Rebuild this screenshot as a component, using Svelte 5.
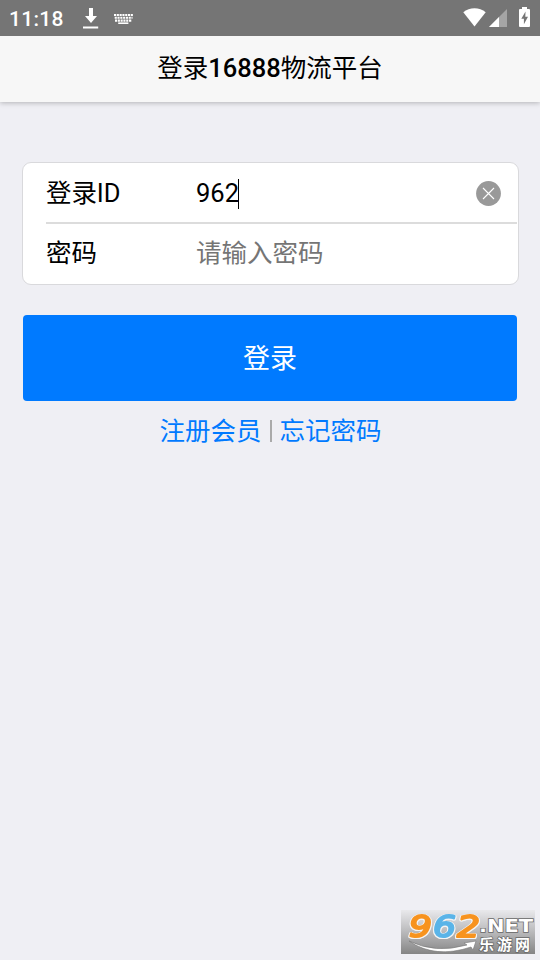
<script>
  let loginId = $state('962');
</script>

<div class="screen">
  <div class="status">
    <span class="time">11:18</span>
    <svg class="download" width="16" height="20" viewBox="0 0 16 20" fill="#fff">
      <path d="M6 0h4v8h4l-6 7-6-7h4zM0 18.4h15.2v2H0z" />
    </svg>
    <svg class="keyboard" width="19" height="11" viewBox="0 0 19 11" stroke="#fff" stroke-width="2.1">
      <path d="M0 1h19M.7 3.8h17.8M1 6.6h17" stroke-dasharray="2.1 .7" />
      <path d="M4.2 9.2h10.2" stroke-width="1.6" />
    </svg>
    <span class="spacer"></span>
    <svg class="wifi" width="23" height="19" viewBox="0 0 23 19">
      <path d="M.3 4.2C6.5-1.2 16.5-1.2 22.7 4.2L11.5 18.6z" fill="#fff" />
    </svg>
    <svg class="signal" width="19" height="19" viewBox="0 0 19 19">
      <path d="M0 18L18 0v18z" fill="#a5a5a5" />
      <path d="M0 18L10 8v10z" fill="#fff" />
    </svg>
    <svg class="battery" width="11" height="20" viewBox="0 0 11 20">
      <path d="M3 0h5v2h2q1 0 1 1v16q0 1-1 1H1q-1 0-1-1V3q0-1 1-1h2z" fill="#fff" />
      <path d="M6.5 4.5L2.3 11.8h2.6v5.5L9 9.8H6.3z" fill="#757575" />
    </svg>
  </div>

  <header>登录<b>16888</b>物流平台</header>

  <main>
    <div class="card">
      <div class="row first">
        <span class="label">登录ID</span>
        <span class="value">{loginId}</span><i class="caret"></i>
        <button class="clear" aria-label="清除" onclick={() => (loginId = '')}>
          <svg width="25" height="25" viewBox="0 0 25 25">
            <circle cx="12.5" cy="12.5" r="12.4" fill="#999" />
            <path d="M7 7l11 11M18 7L7 18" stroke="#fff" stroke-width="1.1" />
          </svg>
        </button>
      </div>
      <div class="row second">
        <span class="label">密码</span>
        <span class="value hint">请输入密码</span>
      </div>
    </div>
    <button class="submit">登录</button>
    <div class="links"><span class="link">注册会员</span><i class="bar"></i><span class="link">忘记密码</span></div>
  </main>

  <svg class="mark" width="134" height="44" viewBox="0 0 134 44">
    <defs>
      <linearGradient id="plate" x1="0" y1="0" x2="0" y2="1">
        <stop offset="0" stop-color="#e9e9ec" />
        <stop offset=".5" stop-color="#b9b9bb" />
        <stop offset="1" stop-color="#858585" />
      </linearGradient>
    </defs>
    <rect width="134" height="44" fill="url(#plate)" />
    <path d="M8 31Q34 44 66 35L63 33 75 31 72 40 70 37Q34 49 8 31z" fill="#fff" stroke="#777" stroke-width=".6" />
    <g class="digits">
      <text x="8" y="26.5" textLength="23" lengthAdjust="spacingAndGlyphs" fill="#f7931e" stroke="#f7931e">9</text>
      <text x="32" y="26.5" textLength="23" lengthAdjust="spacingAndGlyphs" fill="#5ab4e8" stroke="#5ab4e8">6</text>
      <text x="56" y="26.5" textLength="23" lengthAdjust="spacingAndGlyphs" fill="#f7931e" stroke="#f7931e">2</text>
    </g>
    <text class="net" x="78" y="21.5" textLength="54" lengthAdjust="spacingAndGlyphs">.NET</text>
    <text class="name" x="78" y="39.5" textLength="51">乐游网</text>
  </svg>
</div>

<style>
  :global(body) {
    background: #efeff4;
  }
  .screen {
    position: relative;
    height: 960px;
    overflow: hidden;
    background: #efeff4;
    font-family: Roboto, 'Noto Sans CJK SC', sans-serif;
    font-size: 25.5px;
    color: #000;
  }
  .status {
    position: relative;
    z-index: 1;
    display: flex;
    align-items: flex-start;
    box-sizing: border-box;
    height: 36px;
    background: #757575;
    padding: 0 10px 0 9px;
  }
  .status svg {
    flex: none;
    overflow: visible;
  }
  .time {
    width: 74px;
    font-size: 21px;
    font-weight: 500;
    line-height: 38px;
    letter-spacing: 0.3px;
    color: #fff;
  }
  .download {
    margin-top: 8px;
  }
  .keyboard {
    margin: 14px 0 0 15px;
  }
  .spacer {
    flex: 1;
  }
  .wifi {
    margin: 8px 3px 0 0;
  }
  .signal {
    margin: 9px 11px 0 0;
  }
  .battery {
    margin-top: 7px;
  }
  header {
    height: 66px;
    line-height: 64px;
    text-align: center;
    background: #f7f7f7;
    box-shadow: 0 1px 5px rgba(0, 0, 0, 0.25);
    white-space: nowrap;
  }
  header b {
    font-weight: 500;
  }
  main {
    padding: 60px 21px 0 22px;
  }
  .card {
    box-sizing: border-box;
    height: 123px;
    padding-left: 23px;
    background: #fff;
    border: 1px solid #d9d9dc;
    border-radius: 9px;
  }
  .row {
    display: flex;
    align-items: center;
    height: 60px;
    line-height: 60px;
  }
  .first {
    box-sizing: border-box;
    height: 61px;
    border-bottom: 2px solid #dcdcdc;
    margin-right: 1px;
  }
  .second {
    height: 58px;
  }
  .label {
    width: 150px;
    letter-spacing: -0.1px;
  }
  .hint {
    color: #757575;
  }
  .caret {
    width: 1px;
    height: 30px;
    background: #000;
    margin: 2px 0 0 -1px;
  }
  .clear {
    margin: 2px 16px 0 auto;
    padding: 0;
    border: 0;
    width: 25px;
    height: 25px;
    background: none;
  }
  .clear svg {
    display: block;
  }
  .submit {
    display: block;
    width: 494px;
    height: 86px;
    margin: 30px 0 0 1px;
    padding: 0 0 4px;
    border: 0;
    border-radius: 4px;
    background: #007aff;
    color: #fff;
    font-family: inherit;
    font-size: 27px;
  }
  .links {
    display: flex;
    justify-content: center;
    align-items: center;
    height: 54px;
  }
  .link {
    color: #007aff;
  }
  .bar {
    width: 2px;
    height: 22px;
    margin: 5px 8px 0;
    background: #aaa;
  }
  .mark {
    position: absolute;
    left: 401px;
    top: 910px;
  }
  .digits {
    font: italic 30px 'DejaVu Sans', sans-serif;
    stroke-width: 2px;
    stroke-linejoin: round;
    filter: drop-shadow(1px 0 0 #f4f4f4) drop-shadow(-1px 0 0 #f4f4f4) drop-shadow(0 1px 0 #f4f4f4);
  }
  .net,
  .name {
    fill: #fff;
    stroke: #666;
    stroke-width: 1.4px;
    paint-order: stroke;
  }
  .net {
    font: bold 18px 'DejaVu Sans', sans-serif;
  }
  .name {
    font: bold 15px 'Noto Sans CJK SC', sans-serif;
  }
</style>
